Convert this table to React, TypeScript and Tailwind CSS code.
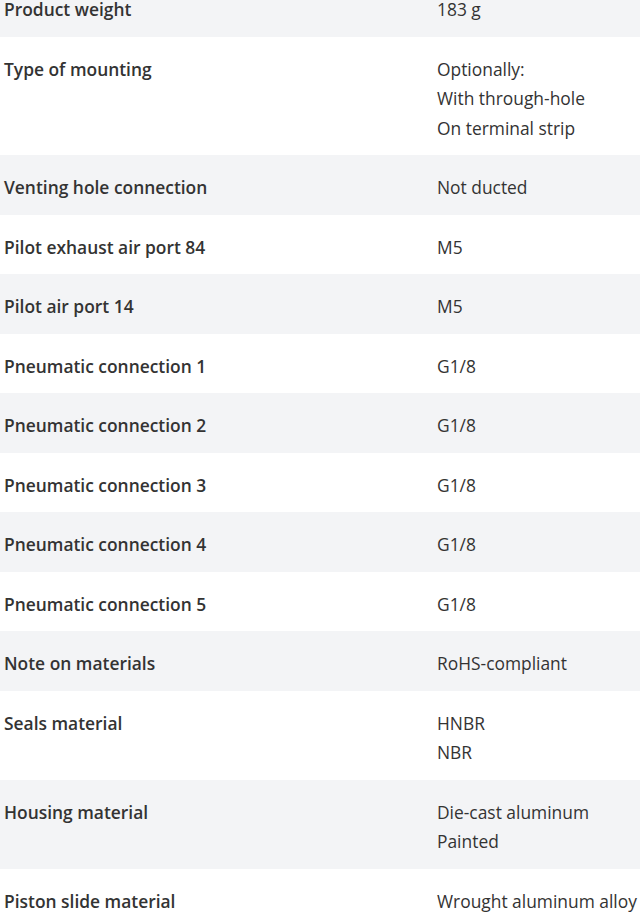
const rows: { label: string; value: string[] }[] = [
    { label: 'Product weight', value: ['183 g'] },
    { label: 'Type of mounting', value: ['Optionally:', 'With through-hole', 'On terminal strip'] },
    { label: 'Venting hole connection', value: ['Not ducted'] },
    { label: 'Pilot exhaust air port 84', value: ['M5'] },
    { label: 'Pilot air port 14', value: ['M5'] },
    { label: 'Pneumatic connection 1', value: ['G1/8'] },
    { label: 'Pneumatic connection 2', value: ['G1/8'] },
    { label: 'Pneumatic connection 3', value: ['G1/8'] },
    { label: 'Pneumatic connection 4', value: ['G1/8'] },
    { label: 'Pneumatic connection 5', value: ['G1/8'] },
    { label: 'Note on materials', value: ['RoHS-compliant'] },
    { label: 'Seals material', value: ['HNBR', 'NBR'] },
    { label: 'Housing material', value: ['Die-cast aluminum', 'Painted'] },
    { label: 'Piston slide material', value: ['Wrought aluminum alloy'] },
];

const App = () => {
    return (
        <div className="w-[640px] h-[913px] overflow-hidden bg-white font-['Open_Sans',sans-serif] text-[#333]">
            {/* spec table, first row cut off at top */}
            <div className="-mt-[23px]">
                {rows.map((row, i) => (
                    <div
                        key={row.label}
                        className={`grid grid-cols-[433px_1fr] pt-[18px] pb-[12px] leading-[29.5px] ${i % 2 === 0 ? 'bg-[#f3f4f6]' : 'bg-white'}`}
                    >
                        <div className="pl-1 text-[17.4px] font-semibold whitespace-nowrap">{row.label}</div>
                        <div className="pl-1 text-[17.4px] whitespace-nowrap">
                            {row.value.map((v) => (
                                <div key={v}>{v}</div>
                            ))}
                        </div>
                    </div>
                ))}
            </div>
        </div>
    );
};

export default App;
